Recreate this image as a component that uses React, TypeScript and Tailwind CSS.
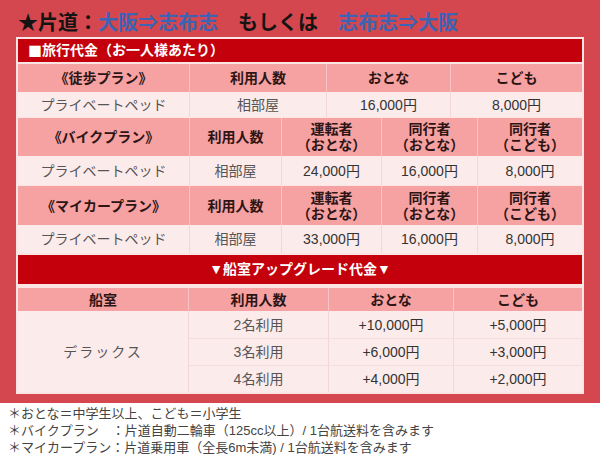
import React from "react";

const head = "flex items-center justify-center text-center font-bold text-[14px] leading-[16px] text-[#2e1515] bg-[#f7a2a2]";
const cell = "flex items-center justify-center text-center text-[14px] leading-[16px] bg-[#fcebeb]";
const sepH = "border-l border-[#fbc4c4]";
const sepD = "border-l border-[#f5d6d6]";

function Two({ top, bottom }: { top: string; bottom: string }) {
  return (
    <span>
      {top}
      <br />
      {bottom}
    </span>
  );
}

export default function App() {
  return (
    <div className="w-[600px] h-[461px] bg-white font-['Liberation_Sans','Noto_Sans_CJK_JP',sans-serif]">
      {/* red panel */}
      <div className="bg-[#d5474e] pt-[9px] pb-[9px] px-[16px]">
        <h1 className="pl-[2px] text-[20px] leading-[28px] font-bold text-[#141414] whitespace-nowrap">
          ★片道：<span className="text-[#3c63b4]">大阪⇒志布志</span>
          {"　もしくは　"}
          <span className="text-[#3c63b4]">志布志⇒大阪</span>
        </h1>

        <div className="border-2 border-[#fbe4e4] bg-[#fbe4e4]">
          {/* 旅行代金 */}
          <div className="h-[23px] bg-[#c3000b] pl-[10px] flex items-center text-white font-bold text-[14px]">
            <span className="font-['Noto_Sans_CJK_JP',sans-serif]">■</span>旅行代金（お一人様あたり）
          </div>
          <div className="h-[2px]" />

          {/* 徒歩プラン */}
          <div className="flex h-[28px]">
            <div className={`${head} w-[171px]`}>《徒歩プラン》</div>
            <div className={`${head} ${sepH} w-[137px]`}>利用人数</div>
            <div className={`${head} ${sepH} w-[124px]`}>おとな</div>
            <div className={`${head} ${sepH} flex-1`}>こども</div>
          </div>
          <div className="flex h-[25px]">
            <div className={`${cell} w-[171px] text-[#555]`}>プライベートペッド</div>
            <div className={`${cell} ${sepD} w-[137px] text-[#555]`}>相部屋</div>
            <div className={`${cell} ${sepD} w-[124px] text-[#333]`}>16,000円</div>
            <div className={`${cell} ${sepD} flex-1 text-[#333]`}>8,000円</div>
          </div>
          <div className="h-px" />

          {/* バイクプラン */}
          <div className="flex h-[38px]">
            <div className={`${head} w-[171px]`}>《バイクプラン》</div>
            <div className={`${head} ${sepH} w-[92px]`}>利用人数</div>
            <div className={`${head} ${sepH} w-[100px]`}>
              <Two top="運転者" bottom="（おとな）" />
            </div>
            <div className={`${head} ${sepH} w-[96px]`}>
              <Two top="同行者" bottom="（おとな）" />
            </div>
            <div className={`${head} ${sepH} flex-1`}>
              <Two top="同行者" bottom="（こども）" />
            </div>
          </div>
          <div className="flex h-[29px]">
            <div className={`${cell} w-[171px] text-[#555]`}>プライベートペッド</div>
            <div className={`${cell} ${sepD} w-[92px] text-[#555]`}>相部屋</div>
            <div className={`${cell} ${sepD} w-[100px] text-[#333]`}>24,000円</div>
            <div className={`${cell} ${sepD} w-[96px] text-[#333]`}>16,000円</div>
            <div className={`${cell} ${sepD} flex-1 text-[#333]`}>8,000円</div>
          </div>
          <div className="h-px" />

          {/* マイカープラン */}
          <div className="flex h-[39px]">
            <div className={`${head} w-[171px]`}>《マイカープラン》</div>
            <div className={`${head} ${sepH} w-[92px]`}>利用人数</div>
            <div className={`${head} ${sepH} w-[100px]`}>
              <Two top="運転者" bottom="（おとな）" />
            </div>
            <div className={`${head} ${sepH} w-[96px]`}>
              <Two top="同行者" bottom="（おとな）" />
            </div>
            <div className={`${head} ${sepH} flex-1`}>
              <Two top="同行者" bottom="（こども）" />
            </div>
          </div>
          <div className="flex h-[28px]">
            <div className={`${cell} w-[171px] text-[#555]`}>プライベートペッド</div>
            <div className={`${cell} ${sepD} w-[92px] text-[#555]`}>相部屋</div>
            <div className={`${cell} ${sepD} w-[100px] text-[#333]`}>33,000円</div>
            <div className={`${cell} ${sepD} w-[96px] text-[#333]`}>16,000円</div>
            <div className={`${cell} ${sepD} flex-1 text-[#333]`}>8,000円</div>
          </div>
          <div className="h-[2px]" />

          {/* 船室アップグレード */}
          <div className="h-[29px] bg-[#c3000b] flex items-center justify-center text-white font-bold text-[14px]">
            ▼船室アップグレード代金▼
          </div>
          <div className="h-[4px]" />
          <div className="flex h-[23px]">
            <div className={`${head} w-[170px]`}>船室</div>
            <div className={`${head} ${sepH} w-[140px]`}>利用人数</div>
            <div className={`${head} ${sepH} w-[125px]`}>おとな</div>
            <div className={`${head} ${sepH} flex-1`}>こども</div>
          </div>
          <div className="flex h-[81px]">
            <div className={`${cell} w-[170px] text-[#555] tracking-[2px]`}>デラックス</div>
            <div className="flex-1 flex flex-col border-l border-[#f5d6d6]">
              {[
                ["2名利用", "+10,000円", "+5,000円"],
                ["3名利用", "+6,000円", "+3,000円"],
                ["4名利用", "+4,000円", "+2,000円"],
              ].map((r, i) => (
                <div
                  key={r[0]}
                  className={`flex h-[27px] ${i > 0 ? "border-t border-[#f7dede]" : ""}`}
                >
                  <div className={`${cell} w-[139px] text-[#555]`}>{r[0]}</div>
                  <div className={`${cell} ${sepD} w-[125px] text-[#333]`}>{r[1]}</div>
                  <div className={`${cell} ${sepD} flex-1 text-[#333]`}>{r[2]}</div>
                </div>
              ))}
            </div>
          </div>
        </div>
      </div>

      {/* notes */}
      <div className="pt-[2px] pl-[8px] text-[13px] leading-[17px] text-[#444] whitespace-nowrap">
        <p>＊おとな＝中学生以上、こども＝小学生</p>
        <p>＊バイクプラン　：片道自動二輪車（125cc以上）/ 1台航送料を含みます</p>
        <p>＊マイカープラン：片道乗用車（全長6m未満) / 1台航送料を含みます</p>
      </div>
    </div>
  );
}
